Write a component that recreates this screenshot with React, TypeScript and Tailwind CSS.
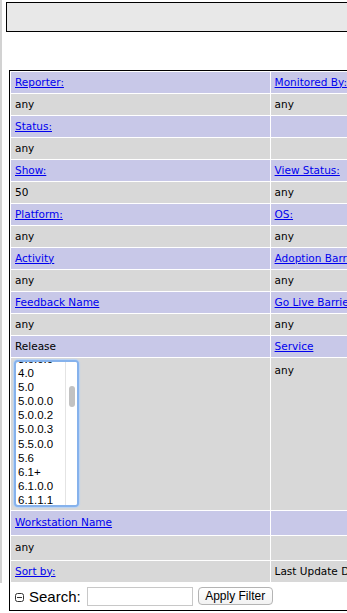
import React from "react";

const hdr = "h-[21px] bg-[#c8c8e8] px-[4px] align-middle";
const val = "h-[21px] bg-[#d8d8d8] px-[4px] align-middle";
const link = "text-[#0000ee] underline";

const rows: [string, string, boolean, boolean][] = [
  ["Reporter:", "Monitored By:", true, true],
  ["any", "any", false, false],
  ["Status:", "", true, true],
  ["any", "", false, false],
  ["Show:", "View Status:", true, true],
  ["50", "any", false, false],
  ["Platform:", "OS:", true, true],
  ["any", "any", false, false],
  ["Activity", "Adoption Barriers", true, true],
  ["any", "any", false, false],
  ["Feedback Name", "Go Live Barriers", true, true],
  ["any", "any", false, false],
];

const releases = ["3.6.0.0", "4.0", "5.0", "5.0.0.0", "5.0.0.2", "5.0.0.3", "5.5.0.0", "5.6", "6.1+", "6.1.0.0", "6.1.1.1"];

function ListBox() {
  return (
    <div className="relative w-[65px] h-[147px] rounded-[4px] border-2 border-[#86b2ec] bg-white shadow-[0_0_1px_1px_#b9d3f5] overflow-hidden">
      <div className="flex h-full">
        <div className="flex-1 overflow-hidden pl-[2px]">
          <div className="-mt-[10px] flex flex-col">
            {releases.map((r) => (
              <div key={r} className="h-[14.1px] leading-[14.1px] text-[11.5px] text-black [font-family:'Liberation_Sans',Arial,sans-serif]">
                {r}
              </div>
            ))}
          </div>
        </div>
        <div className="w-[12px] border-l border-[#e4e4e4] bg-white flex justify-center pt-[24px]">
          <div className="w-[6px] h-[21px] rounded-full bg-[#c2c2c2]" />
        </div>
      </div>
    </div>
  );
}

export default function App() {
  return (
    <div className="flex w-[347px] h-[613px] overflow-hidden bg-white [font-family:'DejaVu_Sans',Verdana,sans-serif] text-[10.5px] text-black">
      <div className="w-[2px] h-[583px] shrink-0 bg-[#d2d2d2]" />
      <div className="flex flex-col pl-[4px] pt-[2px]">
        <div className="w-[400px] h-[30px] shrink-0 border border-black bg-[#e8e8e8]" />
        <table className="mt-[38px] ml-[3px] w-[444px] table-fixed border-separate border-spacing-[1px] border border-black bg-white">
          <colgroup>
            <col className="w-[258px]" />
            <col className="w-[180px]" />
          </colgroup>
          <tbody>
            {rows.map(([a, b, la, lb], i) => (
              <tr key={i}>
                <td className={la ? hdr : val}>
                  {la ? <a className={link}>{a}</a> : a}
                </td>
                <td className={`${la ? hdr : val} whitespace-nowrap overflow-hidden`}>
                  {lb && b ? <a className={link}>{b}</a> : b}
                </td>
              </tr>
            ))}
            <tr>
              <td className={hdr}>Release</td>
              <td className={hdr}>
                <a className={link}>Service</a>
              </td>
            </tr>
            <tr>
              <td className="h-[152px] bg-[#d8d8d8] pl-[3px] pt-[2px] align-top">
                <ListBox />
              </td>
              <td className="h-[152px] bg-[#d8d8d8] px-[4px] pt-[5px] align-top">any</td>
            </tr>
            <tr>
              <td className="h-[24px] bg-[#c8c8e8] px-[4px] align-middle">
                <a className={link}>Workstation Name</a>
              </td>
              <td className="h-[24px] bg-[#c8c8e8]" />
            </tr>
            <tr>
              <td className="h-[24px] bg-[#d8d8d8] px-[4px] align-middle">any</td>
              <td className="h-[24px] bg-[#d8d8d8]" />
            </tr>
            <tr>
              <td className={val}>
                <a className={link}>Sort by:</a>
              </td>
              <td className={`${val} whitespace-nowrap overflow-hidden`}>Last Update Date</td>
            </tr>
            <tr>
              <td colSpan={2} className="h-[26px] bg-white px-[4px] align-middle">
                <div className="flex items-center [font-family:'Liberation_Sans',Arial,sans-serif]">
                  <svg width="9" height="9" viewBox="0 0 9 9" className="mt-[2px]">
                    <rect x="0.5" y="0.5" width="8" height="8" rx="2" fill="none" stroke="#333" strokeWidth="1" />
                    <line x1="2" y1="4.5" x2="7" y2="4.5" stroke="#333" strokeWidth="1" />
                  </svg>
                  <span className="ml-[5px] text-[15px] leading-none">Search:</span>
                  <div className="ml-[6px] w-[106px] h-[19px] border border-[#c8c8c8] bg-white" />
                  <button className="ml-[5px] w-[75px] h-[18px] rounded-[4px] border border-[#b4b4b4] bg-gradient-to-b from-white to-[#f2f2f2] text-[12px] leading-none text-black">
                    Apply Filter
                  </button>
                </div>
              </td>
            </tr>
          </tbody>
        </table>
      </div>
    </div>
  );
}
